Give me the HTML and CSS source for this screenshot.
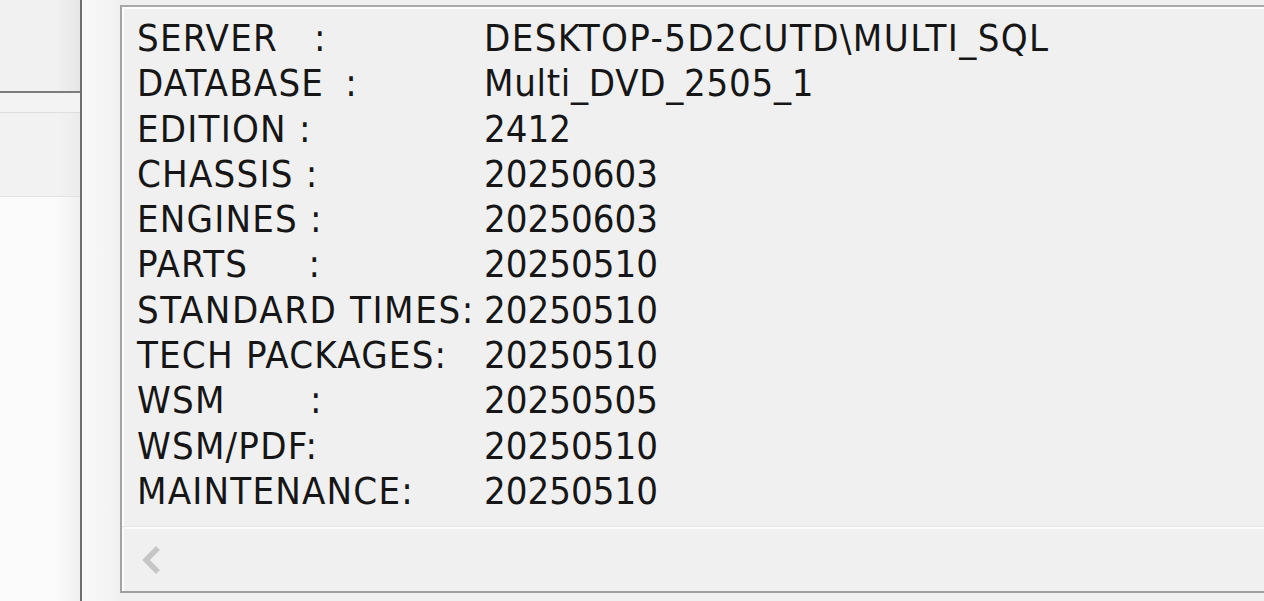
FILE: index.html
```html
<!DOCTYPE html>
<html>
<head>
<meta charset="utf-8">
<link rel="stylesheet" href="styles.css">
</head>
<body>
<div class="side">
  <div class="side-top"></div>
  <div class="side-rule"></div>
  <div class="side-band"></div>
  <div class="side-mid"></div>
  <div class="side-bottom"></div>
</div>
<div class="divider"></div>
<div class="gap"></div>
<div class="frame">
  <div class="list">
    <div class="label">SERVER   :</div><div class="value text">DESKTOP-5D2CUTD\MULTI_SQL</div>
    <div class="label spaced">DATABASE :</div><div class="value text narrow">Multi_DVD_2505_1</div>
    <div class="label">EDITION :</div><div class="value">2412</div>
    <div class="label">CHASSIS :</div><div class="value">20250603</div>
    <div class="label">ENGINES :</div><div class="value">20250603</div>
    <div class="label">PARTS     :</div><div class="value">20250510</div>
    <div class="label wide">STANDARD TIMES:</div><div class="value">20250510</div>
    <div class="label">TECH PACKAGES:</div><div class="value">20250510</div>
    <div class="label">WSM       :</div><div class="value">20250505</div>
    <div class="label">WSM/PDF:</div><div class="value">20250510</div>
    <div class="label">MAINTENANCE:</div><div class="value">20250510</div>
  </div>
  <div class="hscroll">
    <svg class="arrow" width="26" height="32" viewBox="0 0 26 32"><path d="M19 4 L7 16 L19 28" fill="none" stroke="#c6c6c6" stroke-width="5.5" stroke-linejoin="miter"/></svg>
  </div>
</div>
</body>
</html>
```
FILE: styles.css
```css
html, body {
  margin: 0;
  padding: 0;
}
body {
  width: 1264px;
  height: 601px;
  overflow: hidden;
  display: flex;
  background: #f0f0f0;
  font-family: "DejaVu Sans Condensed", "DejaVu Sans", sans-serif;
}
.side {
  width: 80px;
  display: flex;
  flex-direction: column;
  flex-shrink: 0;
}
.side-top {
  height: 91px;
  background: linear-gradient(to right, #f1f1f1 70%, #e6e6e6);
}
.side-rule {
  height: 2px;
  background: #7c7c7c;
}
.side-band {
  height: 19px;
  background: #f3f3f3;
  border-bottom: 1px solid #dedede;
}
.side-mid {
  height: 83px;
  background: linear-gradient(to right, #f2f2f2 75%, #ebebeb);
  border-bottom: 1px solid #e2e2e2;
}
.side-bottom {
  flex: 1;
  background: linear-gradient(to right, #fbfbfb 70%, #f0f0f0);
}
.divider {
  width: 2px;
  flex-shrink: 0;
  background: #6f6f6f;
}
.gap {
  width: 38px;
  flex-shrink: 0;
  background: linear-gradient(to right, #f8f8f8, #f4f4f4 80%, #efefef);
}
.frame {
  flex: 1;
  margin-top: 5px;
  height: 584px;
  border-left: 2px solid #a3a3a3;
  border-top: 2px solid #a9a9a9;
  border-bottom: 2px solid #a0a0a0;
  box-shadow: inset 2px 2px 0 #fdfdfd;
  background: #f0f0f0;
  display: flex;
  flex-direction: column;
}
.list {
  display: grid;
  grid-template-columns: 347px auto;
  align-content: start;
  padding: 9px 0 0 15px;
  height: 511px;
  font-size: 38px;
  line-height: 45.3px;
  color: #161616;
}
.label {
  white-space: pre;
  letter-spacing: 1.2px;
}
.label.wide {
  letter-spacing: 1.6px;
}
.label.spaced {
  word-spacing: 9px;
}
.value {
  white-space: pre;
}
.text {
  letter-spacing: 1.4px;
}
.text.narrow {
  letter-spacing: 0.7px;
}
.hscroll {
  flex: 1;
  border-top: 2px solid #fbfbfb;
  box-shadow: 0 -1px 0 #e6e6e6;
  display: flex;
  align-items: center;
  padding-left: 17px;
}
.arrow {
  display: block;
}
```
